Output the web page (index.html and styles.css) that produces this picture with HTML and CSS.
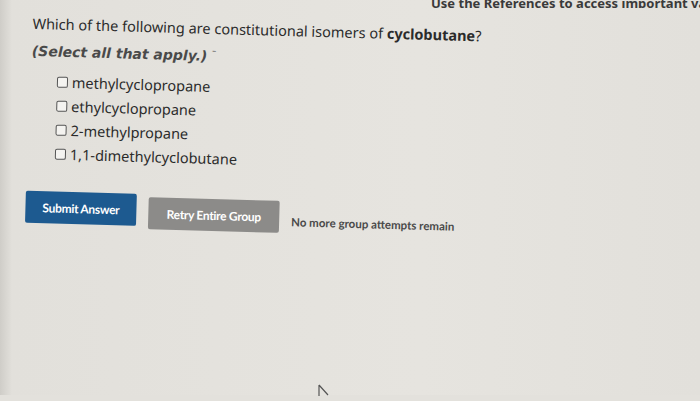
FILE: index.html
```html
<!DOCTYPE html>
<html lang="en">
<head>
  <meta charset="UTF-8">
  <title>Question</title>
  <link rel="stylesheet" href="styles.css">
</head>
<body>
  <div class="screen">
    <div class="refs">Use the References to access important values if needed for this question.</div>
    <div class="question">
      <p class="prompt">Which of the following are constitutional isomers of <b>cyclobutane</b>?</p>
      <p class="hint">(Select all that apply.)<span class="tick">&#175;</span></p>
      <ul class="choices">
        <li><span class="box"></span>methylcyclopropane</li>
        <li><span class="box"></span>ethylcyclopropane</li>
        <li><span class="box"></span>2-methylpropane</li>
        <li><span class="box"></span>1,1-dimethylcyclobutane</li>
      </ul>
      <div class="actions">
        <button class="submit">Submit Answer</button>
        <button class="retry">Retry Entire Group</button>
        <span class="note">No more group attempts remain</span>
      </div>
    </div>
    <svg class="cursor" width="14" height="12" viewBox="0 0 14 12"><path d="M1 1 L1 12 M1 1 L10 11" stroke="#555" stroke-width="1.2" fill="none"/></svg>
  </div>
</body>
</html>
```

FILE: styles.css
```css
html, body {
  margin: 0;
  height: 100%;
  overflow: hidden;
}
body {
  background: #e3e1dc;
  font-family: "Noto Sans", "DejaVu Sans", sans-serif;
  color: #2b2b2b;
}
.screen {
  position: relative;
  height: 100%;
  background: linear-gradient(90deg, #cfcdc8 0, #e2e0db 12px, #e6e4df 60%, #e2e0db 100%);
}
.refs {
  white-space: nowrap;
  overflow: hidden;
  padding-left: 431px;
  margin-top: -6px;
  font-size: 13px;
  font-weight: bold;
  color: #3a3a3a;
  height: 14px;
}
.question {
  padding: 0 0 0 33px;
  transform: rotate(1.6deg);
  transform-origin: 0 0;
}
.prompt {
  margin: 0;
  padding-top: 4px;
  font-size: 14.5px;
  line-height: 20px;
}
.hint {
  margin: 8px 0 0;
  font-family: "DejaVu Sans", sans-serif;
  font-size: 14px;
  font-style: italic;
  font-weight: bold;
  color: #4a4a4a;
  line-height: 20px;
}
.tick {
  font-style: normal;
  font-weight: normal;
  margin-left: 4px;
  color: #777;
  font-size: 11px;
  vertical-align: top;
}
.choices {
  list-style: none;
  margin: 8px 0 0;
  padding: 0 0 0 26px;
}
.choices li {
  display: flex;
  align-items: center;
  font-size: 14.5px;
  line-height: 24px;
}
.box {
  width: 9px;
  height: 9px;
  border: 1.5px solid #555;
  border-radius: 2px;
  background: #f4f3f0;
  margin-right: 4px;
}
.actions {
  display: flex;
  align-items: center;
  gap: 12px;
  margin: 29px 0 0 -2px;
}
button {
  font-family: "Lato", "Liberation Sans", sans-serif;
  font-size: 12px;
  font-weight: bold;
  letter-spacing: -0.3px;
  white-space: nowrap;
  color: #fff;
  border: none;
  border-radius: 2px;
  height: 32px;
  padding: 0 8px;
}
.submit {
  background: #1d5a90;
  width: 111px;
  position: relative;
  top: -3px;
}
.retry {
  background: #8c8b89;
  width: 131px;
}
.note {
  font-family: "Lato", "Liberation Sans", sans-serif;
  font-size: 11.5px;
  font-weight: bold;
  color: #4a4a4a;
  margin-top: 9px;
}
.cursor {
  position: absolute;
  left: 318px;
  top: 390px;
}
```
